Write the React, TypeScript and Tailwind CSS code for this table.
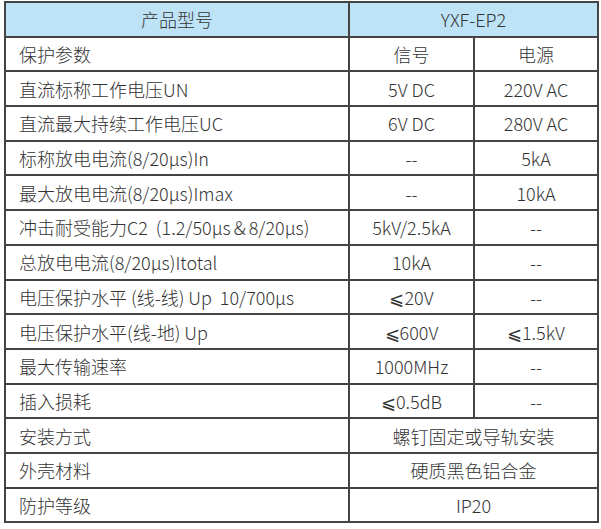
const rows: [string, string, string?][] = [
  ['保护参数', '信号', '电源'],
  ['直流标称工作电压UN', '5V DC', '220V AC'],
  ['直流最大持续工作电压UC', '6V DC', '280V AC'],
  ['标称放电电流(8/20μs)In', '--', '5kA'],
  ['最大放电电流(8/20μs)Imax', '--', '10kA'],
  ['冲击耐受能力C2  (1.2/50μs＆8/20μs)', '5kV/2.5kA', '--'],
  ['总放电电流(8/20μs)Itotal', '10kA', '--'],
  ['电压保护水平 (线-线) Up  10/700μs', '⩽20V', '--'],
  ['电压保护水平(线-地) Up', '⩽600V', '⩽1.5kV'],
  ['最大传输速率', '1000MHz', '--'],
  ['插入损耗', '⩽0.5dB', '--'],
  ['安装方式', '螺钉固定或导轨安装'],
  ['外壳材料', '硬质黑色铝合金'],
  ['防护等级', 'IP20'],
];

export default function App() {
  return (
    <div className="w-[601px] h-[529px] bg-white pt-[1px] pl-[4px]">
      <table
        className="table-fixed border-collapse text-[#333] text-[18px] leading-none w-[593px]"
        style={{ fontFamily: '"Noto Sans CJK SC", "Noto Sans", sans-serif' }}
      >
        <colgroup>
          <col className="w-[344px]" />
          <col className="w-[125px]" />
          <col className="w-[124px]" />
        </colgroup>
        <tbody>
          <tr className="h-[34.7px] bg-[#bee3f7]">
            <td className="border-2 border-[#444] text-center font-light">产品型号</td>
            <td colSpan={2} className="border-2 border-[#444] text-center font-light">YXF-EP2</td>
          </tr>
          {rows.map(([label, a, b], i) => (
            <tr key={i} className="h-[34.7px]">
              <td className="border-2 border-[#444] pl-[13px] font-light whitespace-pre">{label}</td>
              {b === undefined ? (
                <td colSpan={2} className="border-2 border-[#444] text-center font-light">{a}</td>
              ) : (
                <>
                  <td className="border-2 border-[#444] text-center font-light">{a}</td>
                  <td className="border-2 border-[#444] text-center font-light">{b}</td>
                </>
              )}
            </tr>
          ))}
        </tbody>
      </table>
    </div>
  );
}
